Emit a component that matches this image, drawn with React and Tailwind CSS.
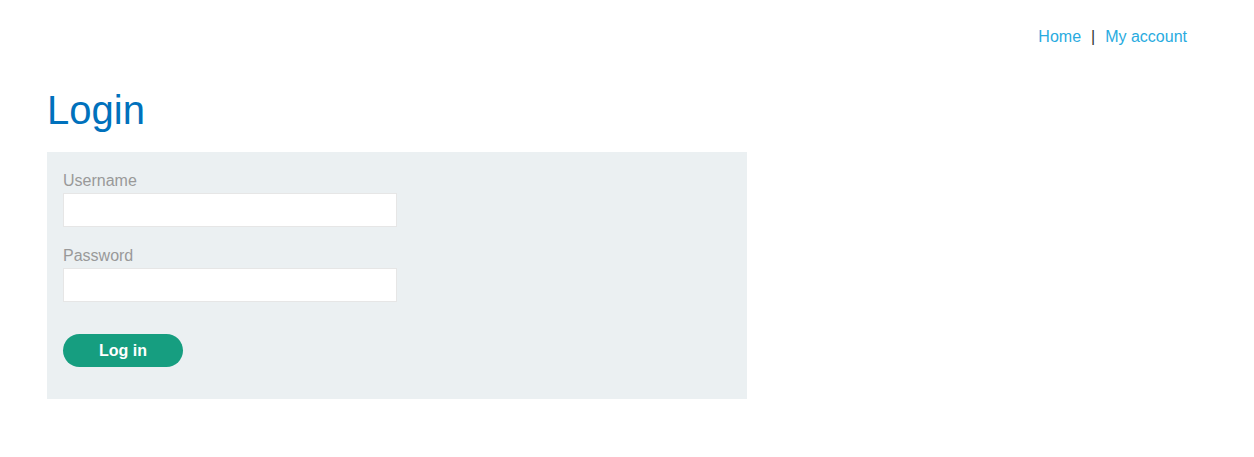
import React from "react";

const App = () => {
  return (
    <div className="min-h-[457px] bg-white font-['Liberation_Sans',Arial,sans-serif] text-[#333332]">
      {/* top nav */}
      <div className="flex justify-end pt-[28px] pr-[67px] text-[16px] leading-[18px]">
        <a href="#" className="text-[#29abe0]">Home</a>
        <span className="mx-[10px] text-[#333332]">|</span>
        <a href="#" className="text-[#29abe0]">My account</a>
      </div>

      <div className="px-[47px]">
        <h1 className="mt-[39px] text-[40px] leading-[48px] pt-px font-normal text-[#0071bc]">Login</h1>

        <form className="mt-[18px] w-[700px] bg-[#ebf0f2] px-[16px] pt-[20px] pb-[32px]">
          <label className="block text-[16px] leading-[18px] text-[#999999]" htmlFor="username">
            Username
          </label>
          <input
            id="username"
            type="text"
            className="mt-[3px] block h-[34px] w-[334px] border border-[#e6e6e6] bg-white px-2 text-[16px] outline-none"
          />
          <label className="mt-[20px] block text-[16px] leading-[18px] text-[#999999]" htmlFor="password">
            Password
          </label>
          <input
            id="password"
            type="password"
            className="mt-[3px] block h-[34px] w-[334px] border border-[#e6e6e6] bg-white px-2 text-[16px] outline-none"
          />
          <button
            type="submit"
            className="mt-[32px] block h-[33px] w-[120px] rounded-full bg-[#169e80] text-[16px] font-bold text-white"
          >
            Log in
          </button>
        </form>
      </div>
    </div>
  );
};

export default App;
